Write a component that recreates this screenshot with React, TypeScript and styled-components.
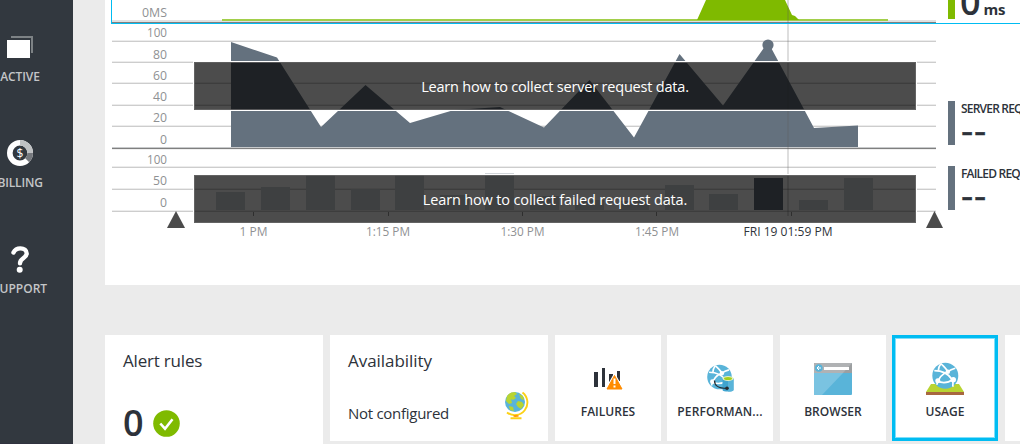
import React from "react";
import styled, { createGlobalStyle, css } from "styled-components";

const GlobalStyle = createGlobalStyle`
  html, body { margin: 0; padding: 0; background: #ebebeb; overflow: hidden; }
  * { box-sizing: border-box; }
`;

const font = `"Open Sans", "Noto Sans", sans-serif`;

const Page = styled.div`
  display: flex;
  width: 1020px;
  height: 444px;
  overflow: hidden;
  background: #ebebeb;
  font-family: ${font};
  color: #2d323a;
`;

const Sidebar = styled.nav`
  flex: none;
  width: 73px;
  height: 444px;
  padding-top: 33px;
  background: #32383f;
  border-bottom: 1px solid #30323f;
`;

const NavItem = styled.div`
  display: flex;
  flex-direction: column;
  align-items: center;
  gap: 8px;
  width: 40px;
  height: 106px;
`;

const NavIcon = styled.svg`
  flex: none;
  width: 28px;
  height: 28px;
`;

const NavLabel = styled.span<{ $spacing: number }>`
  font-size: 12px;
  line-height: 16px;
  font-weight: 600;
  letter-spacing: ${(p) => p.$spacing}px;
  margin-right: ${(p) => p.$spacing}px;
  color: #c4c6c8;
  white-space: nowrap;
`;

const Main = styled.main`
  flex: none;
  width: 947px;
  padding-left: 32px;
`;

const Panel = styled.section`
  height: 285px;
  background: #fff;
`;

const ChartRow = styled.div<{ $height: number; $selected?: boolean }>`
  display: flex;
  position: relative;
  height: ${(p) => p.$height}px;
  margin-left: 6px;
  border-style: solid;
  border-width: ${(p) => (p.$selected ? "0 0 1px 1px" : "0 0 0 1px")};
  border-color: ${(p) => (p.$selected ? "#00bcf2" : "transparent")};
`;

const Plot = styled.svg`
  flex: none;
  width: 836px;
  height: 100%;
  overflow: visible;
  font-family: ${font};
  font-size: 12px;
`;

const Metric = styled.div<{ $top: number; $height: number; $color: string }>`
  flex: none;
  width: 240px;
  height: ${(p) => p.$height}px;
  margin-top: ${(p) => p.$top}px;
  padding-left: 6px;
  border-left: 7px solid ${(p) => p.$color};
  white-space: nowrap;
`;

const MetricName = styled.div`
  font-size: 12px;
  line-height: 16px;
  font-weight: 600;
  letter-spacing: -0.8px;
`;

const MetricValue = styled.div`
  display: flex;
  align-items: baseline;
  gap: 3px;
  font-size: 36px;
  line-height: 36px;
  font-weight: 600;
  margin: -16px 0 0 -1px;
`;

const Unit = styled.span`
  font-size: 15px;
  font-weight: 700;
  letter-spacing: -0.3px;
`;

const NoValue = styled.div`
  font-size: 38px;
  line-height: 26px;
  font-weight: 400;
  letter-spacing: 0.8px;
  margin-top: -1px;
  -webkit-text-stroke: 0.4px #2d323a;
`;

const Notice = styled.div<{ $top: number; $spacing: number }>`
  position: absolute;
  left: 82px;
  top: ${(p) => p.$top}px;
  width: 722px;
  height: 48px;
  border: 1px solid rgba(110, 110, 110, 0.7);
  box-shadow: 0 0 0 1px #fff;
  background: rgba(0, 0, 0, 0.7);
  color: #fff;
  font-size: 14.5px;
  line-height: 47px;
  letter-spacing: ${(p) => p.$spacing}px;
  text-align: center;
  z-index: 1;
`;

const Tiles = styled.section`
  display: grid;
  grid-template-columns: 225px 225px 112px 113px 112px 113px 112px;
  margin-top: 50px;
`;

const InfoTile = styled.div<{ $height: number }>`
  width: 218px;
  height: ${(p) => p.$height}px;
  padding: 14px 18px 0;
  background: #fff;
`;

const TileTitle = styled.div<{ $spacing: number }>`
  font-size: 17px;
  line-height: 24px;
  letter-spacing: ${(p) => p.$spacing}px;
`;

const AlertStatus = styled.div`
  display: flex;
  align-items: center;
  gap: 9px;
  margin-top: 32px;
  height: 36px;
`;

const Count = styled.span`
  font-size: 36px;
  line-height: 36px;
  font-weight: 600;
`;

const AvailabilityStatus = styled.div`
  display: flex;
  justify-content: space-between;
  align-items: center;
  height: 36px;
  margin-top: 14px;
`;

const StatusText = styled.span`
  padding-top: 16px;
  font-size: 15px;
  line-height: 20px;
  letter-spacing: -0.28px;
  white-space: nowrap;
`;

const IconTile = styled.div<{ $selected?: boolean }>`
  display: flex;
  flex-direction: column;
  align-items: center;
  gap: 9px;
  width: 106px;
  height: 106px;
  padding-top: 28px;
  background: #fff;
  ${(p) =>
    p.$selected &&
    css`
      box-shadow: inset 0 0 0 3px #00bcf2, inset 0 0 0 4px #80def9;
    `}
`;

const TileIcon = styled.svg`
  flex: none;
  width: 40px;
  height: 32px;
  overflow: visible;
`;

const IconLabel = styled.span<{ $spacing: number }>`
  font-size: 12px;
  line-height: 16px;
  font-weight: 600;
  letter-spacing: ${(p) => p.$spacing}px;
  white-space: nowrap;
`;

const CheckIcon = styled.svg`
  flex: none;
  width: 27px;
  height: 27px;
`;

const GlobeIcon = styled.svg`
  flex: none;
  width: 26px;
  height: 30px;
  overflow: visible;
`;

type LabelProps = { x: number; y: number; w: number; children: string; anchor?: "end" | "middle"; fill?: string };
const Label = ({ x, y, w, children, anchor = "end", fill = "#8f9193" }: LabelProps) => (
  <text x={x} y={y} textAnchor={anchor} textLength={w} lengthAdjust="spacingAndGlyphs" fill={fill}>
    {children}
  </text>
);

const GridLine = ({ y }: { y: number }) => (
  <>
    <rect x={0} y={y - 1} width={824} height={1} fill="#ececec" />
    <rect x={0} y={y} width={824} height={1} fill="#cdcdcd" />
  </>
);

const requestLabels: [string, number, number, number][] = [
  ["100", 13, 20, 17],
  ["80", 35, 14, 38],
  ["60", 56, 14, 59],
  ["40", 77, 14, 81],
  ["20", 98, 14, 102],
];

const failedBars: [number, number][] = [
  [104, 42], [149, 37], [194, 25], [239, 39], [283, 25], [328, 45], [373, 23],
  [418, 46], [463, 50], [508, 51], [553, 35], [597, 44], [642, 28], [687, 50], [732, 28],
];

const WebGlobe = ({ cx, cy, r }: { cx: number; cy: number; r: number }) => (
  <g transform={`translate(${cx} ${cy}) scale(${r / 13})`}>
    <circle r={13} fill="#59b4d9" />
    <g fill="none" stroke="#fff" strokeWidth={1.7}>
      <path d="M-4.5 -12 C-1 -9 1 -7 2.500 -4 C5 -6 8 -7 10 -7.500" />
      <path d="M2.500 -4 C-3 -2 -7 2 -8.500 9" />
      <path d="M-11 -5 C-4 -5 3 -2 7 4 C8 7 8 9 7.500 11" />
      <path d="M-8 5 C-3 8 3 7 8 3.500" />
      <path d="M-4.500 -12 C-6 -10 -7 -7 -7 -5" />
    </g>
    <circle cx={2.500} cy={-4} r={2.300} fill="#fff" />
    <circle cx={8} cy={4} r={2.700} fill="#fff" />
    <circle cx={-7.500} cy={5} r={2.500} fill="#fff" />
  </g>
);

export default function App() {
  return (
    <>
      <GlobalStyle />
      <Page>
        <Sidebar>
          <NavItem>
            <NavIcon viewBox="0 0 28 28">
              <path d="M5 3h22v17h-2V5H5z" fill="#7d8285" />
              <rect x={1} y={7} width={23} height={18} fill="#fff" />
            </NavIcon>
            <NavLabel $spacing={-0.1}>ACTIVE</NavLabel>
          </NavItem>
          <NavItem>
            <NavIcon viewBox="0 0 28 28">
              <circle cx={14} cy={14} r={10.2} fill="none" stroke="#fff" strokeWidth={5.600} />
              <path d="M14 1a13 13 0 0 1 13 13h-5.600a7.400 7.400 0 0 0 -7.400 -7.400z" fill="#bfc1c3" />
              <path d="M27 14a13 13 0 0 1 -3.800 9.200l-4 -4a7.400 7.400 0 0 0 2.200 -5.200z" fill="#75787d" />
              <text x={14} y={18.5} textAnchor="middle" fontSize={12} fill="#fff">$</text>
            </NavIcon>
            <NavLabel $spacing={-0.15}>BILLING</NavLabel>
          </NavItem>
          <NavItem>
            <NavIcon viewBox="0 0 28 28">
              <path
                d="M7.500 7.500C9 4.500 11.500 3.400 14.400 3.400C18 3.400 20.700 5.300 20.700 8.600C20.700 13 14 13 14 18.200"
                fill="none"
                stroke="#fff"
                strokeWidth={4.400}
                strokeLinecap="round"
              />
              <circle cx={13.7} cy={24.8} r={3} fill="#fff" />
            </NavIcon>
            <NavLabel $spacing={0}>SUPPORT</NavLabel>
          </NavItem>
        </Sidebar>

        <Main>
          <Panel>
            <ChartRow $height={24} $selected>
              <Plot>
                <Label x={55} y={17} w={25}>0MS</Label>
                <rect x={0} y={20} width={824} height={2} fill="#e1e1e1" />
                <rect x={0} y={22} width={824} height={1} fill="#7f7f7f" />
                <rect x={110} y={19} width={666} height={2} fill="#a2cf4a" />
                <path d="M585 20L594 0H673L680 15L683 16L687 20Z" fill="#7fba00" />
                <rect x={675} y={0} width={2} height={23} fill="rgba(90,90,90,.22)" />
              </Plot>
              <Metric $top={0} $height={19} $color="#7fba00">
                <MetricValue>
                  <span>0</span>
                  <Unit>ms</Unit>
                </MetricValue>
              </Metric>
            </ChartRow>

            <ChartRow $height={126}>
              <Plot>
                {requestLabels.map(([t, y, w, line]) => (
                  <g key={t}>
                    <GridLine y={line} />
                    <Label x={55} y={y} w={w}>{t}</Label>
                  </g>
                ))}
                <Label x={55} y={120} w={7}>0</Label>
                <path
                  d="M119 123V18L165 33.500L209 103L253.500 61L298 99L342 86L388 83L432 103.500L477.500 56L522 113.500L567.500 30L611 81.500L656 18L702 104L746 101.500V123Z"
                  fill="#64717e"
                />
                <circle cx={656} cy={21} r={5.600} fill="#64717e" />
                <rect x={0} y={123} width={824} height={1} fill="#c8cacc" />
                <rect x={0} y={124} width={824} height={1} fill="#7f7f7f" />
                <rect x={0} y={125} width={824} height={1} fill="#f0f0f0" />
                <rect x={675} y={0} width={2} height={126} fill="rgba(90,90,90,.2)" />
              </Plot>
              <Metric $top={77} $height={44} $color="#64717e">
                <MetricName>SERVER REQUESTS</MetricName>
                <NoValue>--</NoValue>
              </Metric>
              <Notice $top={38} $spacing={-0.19}>Learn how to collect server request data.</Notice>
            </ChartRow>

            <ChartRow $height={135}>
              <Plot>
                <GridLine y={17} />
                <GridLine y={39} />
                <Label x={55} y={14} w={20}>100</Label>
                <Label x={55} y={35} w={14}>50</Label>
                <Label x={55} y={57} w={7}>0</Label>
                {failedBars.map(([x, y]) => (
                  <rect key={x} x={x} y={y} width={29} height={61 - y} fill={x === 642 ? "#64717e" : "#d1d5d9"} />
                ))}
                <GridLine y={61} />
                {[141, 276, 410, 544, 679].map((x) => (
                  <rect key={x} x={x} y={62} width={1} height={4} fill="#999" />
                ))}
                <rect x={675} y={0} width={2} height={66} fill="rgba(90,90,90,.2)" />
                <path d="M64 61L73 78H55Z" fill="#4b4b4b" />
                <path d="M822.500 61L831 78H814Z" fill="#4b4b4b" />
                <Label anchor="middle" x={141.5} y={86} w={28}>1 PM</Label>
                <Label anchor="middle" x={276} y={86} w={44}>1:15 PM</Label>
                <Label anchor="middle" x={410.5} y={86} w={44}>1:30 PM</Label>
                <Label anchor="middle" x={545} y={86} w={44}>1:45 PM</Label>
                <Label anchor="middle" x={676} y={86} w={89} fill="#30343b">FRI 19 01:59 PM</Label>
              </Plot>
              <Metric $top={16} $height={44} $color="#64717e">
                <MetricName>FAILED REQUESTS</MetricName>
                <NoValue>--</NoValue>
              </Metric>
              <Notice $top={25} $spacing={-0.15}>Learn how to collect failed request data.</Notice>
            </ChartRow>
          </Panel>

          <Tiles>
            <InfoTile $height={109}>
              <TileTitle $spacing={-0.2}>Alert rules</TileTitle>
              <AlertStatus>
                <Count>0</Count>
                <CheckIcon viewBox="0 0 27 27">
                  <circle cx={13.5} cy={13.5} r={13.3} fill="#7fba00" />
                  <path d="M7.300 13.500l4.700 5.200l7.500 -9.500" fill="none" stroke="#fff" strokeWidth={2.600} />
                </CheckIcon>
              </AlertStatus>
            </InfoTile>
            <InfoTile $height={106}>
              <TileTitle $spacing={-0.05}>Availability</TileTitle>
              <AvailabilityStatus>
                <StatusText>Not configured</StatusText>
                <GlobeIcon viewBox="0 0 26 30">
                  <path d="M18.500 2.500A12.300 12.300 0 0 1 3 22.500" fill="none" stroke="#fcd116" strokeWidth={1.900} />
                  <path d="M11.500 25v2M6.500 28.200h11" stroke="#fcd116" strokeWidth={2} />
                  <path d="M9.500 26h5" stroke="#ff8c00" strokeWidth={1.500} />
                  <circle cx={11} cy={12} r={10} fill="#59b4d9" />
                  <path d="M3 6C5 3 8 2 11 2L13 4L10 6L12 8L9 10L7 9L8 13L5 14L2 11ZM15 4L19 6L20 10L17 9ZM14 11L18 12L20 15L17 19L14 17L12 14ZM5 16L9 17L10 21L6 20Z" fill="#b8d432" />
                </GlobeIcon>
              </AvailabilityStatus>
            </InfoTile>
            <IconTile>
              <TileIcon viewBox="0 0 40 32">
                <path d="M6 9h4v15H6zM14 5h3v19h-3zM21 11h4v8h-4zM29 8h3v10h-3z" fill="#2d323a" />
                <path d="M26.500 12L34.500 26H18.500Z" fill="#ff8c00" stroke="#fff" strokeWidth={2.5} strokeLinejoin="round" />
                <path d="M26.500 12.500L34 26H19Z" fill="#ff8c00" stroke="#ff8c00" strokeLinejoin="round" />
                <path d="M26.500 15.500v5.500M26.500 22.500v2" stroke="#fff" strokeWidth={2} />
              </TileIcon>
              <IconLabel $spacing={0}>FAILURES</IconLabel>
            </IconTile>
            <IconTile>
              <TileIcon viewBox="0 0 40 32">
                <WebGlobe cx={19.5} cy={14} r={12.3} />
                <path d="M22.500 15.500h11v11.500c0 2 -11 2 -11 0z" fill="#3fa4cf" />
                <path d="M28 15.500h5.500v11.500c0 1 -2.500 1.500 -5.500 1.500z" fill="#59b4d9" />
                <ellipse cx={28} cy={15.5} rx={5.5} ry={2.5} fill="#e6f2c0" />
                <ellipse cx={28} cy={15.5} rx={4} ry={1.5} fill="#a4cf1c" />
                <path d="M14.500 17.500C14.500 23 18 25.300 27 25.300" fill="none" stroke="#252a30" strokeWidth={1.300} />
                <circle cx={27} cy={25.3} r={1.8} fill="#252a30" />
              </TileIcon>
              <IconLabel $spacing={0.15}>PERFORMAN...</IconLabel>
            </IconTile>
            <IconTile>
              <TileIcon viewBox="0 0 40 32">
                <rect x={1} y={0} width={38} height={32} rx={1} fill="#59b4d9" />
                <path d="M1 10h29L9 32H1z" fill="#7ac3e1" />
                <path d="M1 10V1q0 -1 1 -1h36q1 0 1 1v9z" fill="#9c9fa1" />
                <path d="M1 10V1q0 -1 1 -1h37L30 10z" fill="#b0b2b4" />
                <rect x={11} y={4} width={25} height={3} fill="#fff" />
                <circle cx={5.8} cy={5} r={3.8} fill="#59b4d9" />
                <path d="M8 5H4M6 3L4 5L6 7" fill="none" stroke="#fff" />
              </TileIcon>
              <IconLabel $spacing={0.05}>BROWSER</IconLabel>
            </IconTile>
            <IconTile $selected>
              <TileIcon viewBox="0 0 40 32">
                <path d="M6 21h28l5 8H1z" fill="#b8d432" />
                <rect x={1} y={29} width={38} height={3} fill="#a8673f" />
                <WebGlobe cx={20.3} cy={12.7} r={13} />
              </TileIcon>
              <IconLabel $spacing={0}>USAGE</IconLabel>
            </IconTile>
            <IconTile />
          </Tiles>
        </Main>
      </Page>
    </>
  );
}
